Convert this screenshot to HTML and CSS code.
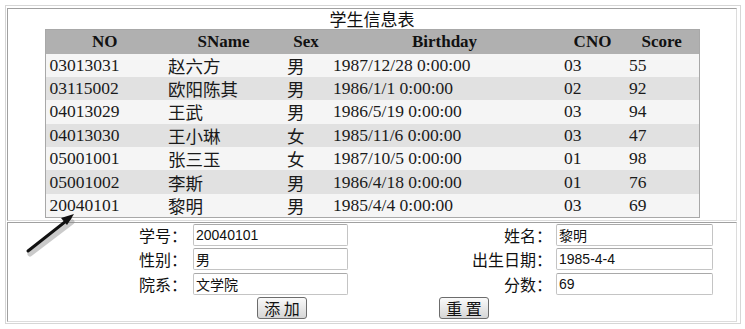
FILE: index.html
```html
<!DOCTYPE html>
<html lang="zh-CN">
<head>
    <meta charset="UTF-8">
    <title>学生信息表</title>
    <link rel="stylesheet" href="styles.css">
</head>
<body>
    <div class="frame">
        <div class="cell list-cell">
            <div class="caption">学生信息表</div>
            <table class="grid">
                <colgroup>
                    <col style="width:119px"><col style="width:119px"><col style="width:46px">
                    <col style="width:231px"><col style="width:65px"><col style="width:74px">
                </colgroup>
                <thead>
                    <tr><th>NO</th><th>SName</th><th>Sex</th><th>Birthday</th><th>CNO</th><th>Score</th></tr>
                </thead>
                <tbody>
                    <tr><td>03013031</td><td class="cjk">赵六方</td><td class="cjk">男</td><td>1987/12/28 0:00:00</td><td>03</td><td>55</td></tr>
                    <tr><td>03115002</td><td class="cjk">欧阳陈其</td><td class="cjk">男</td><td>1986/1/1 0:00:00</td><td>02</td><td>92</td></tr>
                    <tr><td>04013029</td><td class="cjk">王武</td><td class="cjk">男</td><td>1986/5/19 0:00:00</td><td>03</td><td>94</td></tr>
                    <tr><td>04013030</td><td class="cjk">王小琳</td><td class="cjk">女</td><td>1985/11/6 0:00:00</td><td>03</td><td>47</td></tr>
                    <tr><td>05001001</td><td class="cjk">张三玉</td><td class="cjk">女</td><td>1987/10/5 0:00:00</td><td>01</td><td>98</td></tr>
                    <tr><td>05001002</td><td class="cjk">李斯</td><td class="cjk">男</td><td>1986/4/18 0:00:00</td><td>01</td><td>76</td></tr>
                    <tr><td>20040101</td><td class="cjk">黎明</td><td class="cjk">男</td><td>1985/4/4 0:00:00</td><td>03</td><td>69</td></tr>
                </tbody>
            </table>
        </div>
        <div class="cell form-cell">
            <form class="edit-form" onsubmit="return false">
                <label class="lbl">学号：</label>
                <input class="field" type="text" value="20040101">
                <label class="lbl lbl-right">姓名：</label>
                <input class="field field-right" type="text" value="黎明">

                <label class="lbl">性别：</label>
                <input class="field" type="text" value="男">
                <label class="lbl lbl-right">出生日期：</label>
                <input class="field field-right" type="text" value="1985-4-4">

                <label class="lbl">院系：</label>
                <input class="field" type="text" value="文学院">
                <label class="lbl lbl-right">分数：</label>
                <input class="field field-right" type="text" value="69">

                <div class="actions">
                    <button type="button" class="btn">添 加</button>
                    <button type="reset" class="btn">重 置</button>
                </div>
            </form>
        </div>

        <!-- arrow pointing at the selected row -->
        <svg class="pointer" width="70" height="60" viewBox="0 0 70 60">
            <path d="M10 47 L52 15" stroke="#8c8c8c" stroke-width="5" stroke-linecap="round" opacity="0.45"/>
            <path d="M8 44 L50 11" stroke="#111" stroke-width="3" stroke-linecap="round"/>
            <path d="M54 7 L41 11 L47 18 Z" fill="#111"/>
        </svg>
    </div>
</body>
</html>
```

FILE: styles.css
```css
* {
    box-sizing: border-box;
}

body {
    margin: 0;
    padding: 5px 0 0 5px;
    background: #fff;
    color: #000;
    font-family: "Liberation Serif", "Noto Sans CJK SC", serif;
}

.frame {
    position: relative;
    width: 736px;
    height: 319px;
    border: 1px solid #d6d6d6;
    padding: 2px 3px 1px 1px;
    display: flex;
    flex-direction: column;
    gap: 1px;
}

.cell {
    border: 1px solid;
    border-color: #a0a0a0 #dcdcdc #dcdcdc #a0a0a0;
}

.list-cell {
    height: 213px;
}

.caption {
    height: 20px;
    line-height: 20px;
    text-align: center;
    font-family: "Noto Sans CJK SC", sans-serif;
    font-size: 17px;
    color: #111;
}

.grid {
    margin: 0 auto;
    width: 655px;
    table-layout: fixed;
    border-collapse: collapse;
    border: 1px solid #a8a8a8;
    font-size: 17.5px;
    line-height: 19px;
}

.grid th {
    height: 24px;
    padding: 0;
    background: #b0b0b0;
    font-size: 17px;
    font-weight: bold;
    text-align: center;
    color: #111;
}

.grid td {
    height: 23.4px;
    padding: 0 2px 0 4px;
    color: #1a1a1a;
    white-space: nowrap;
    overflow: hidden;
}

.grid td.cjk {
    font-family: "Noto Sans CJK SC", sans-serif;
    font-size: 17.5px;
    line-height: 19px;
}

.grid tbody tr:nth-child(odd) {
    background: #f5f5f5;
}

.grid tbody tr:nth-child(even) {
    background: #e1e1e1;
}

.form-cell {
    flex: 1;
    padding: 1px 0 1px 0;
}

.edit-form {
    display: grid;
    grid-template-columns: 185px 155px 208px 157px;
    grid-auto-rows: 22px;
    row-gap: 2.4px;
    align-items: center;
}

.lbl {
    text-align: right;
    padding-right: 6px;
    font-family: "Noto Sans CJK SC", sans-serif;
    font-size: 16px;
    line-height: 22px;
    color: #111;
}

.lbl-right {
    padding-right: 4px;
}

.field {
    width: 155px;
    height: 22px;
    margin: 0;
    padding: 0 2px;
    border: 1px solid #c4c4c4;
    border-top-color: #a9a9a9;
    border-radius: 2px;
    background: #fff;
    font-family: "Liberation Sans", "Noto Sans CJK SC", sans-serif;
    font-size: 14px;
    color: #111;
}

.field-right {
    width: 157px;
}

.actions {
    grid-column: 1 / -1;
    display: flex;
    justify-content: center;
    gap: 132px;
    padding-left: 25px;
}

.btn {
    width: 50px;
    height: 22px;
    padding: 0;
    border: 1px solid #6c6c6c;
    border-radius: 3px;
    background: linear-gradient(#fafafa, #d6d6d6);
    font-family: "Noto Sans CJK SC", sans-serif;
    font-size: 16px;
    line-height: 18px;
    color: #111;
}

.pointer {
    position: absolute;
    left: 14px;
    top: 201px;
}
```
